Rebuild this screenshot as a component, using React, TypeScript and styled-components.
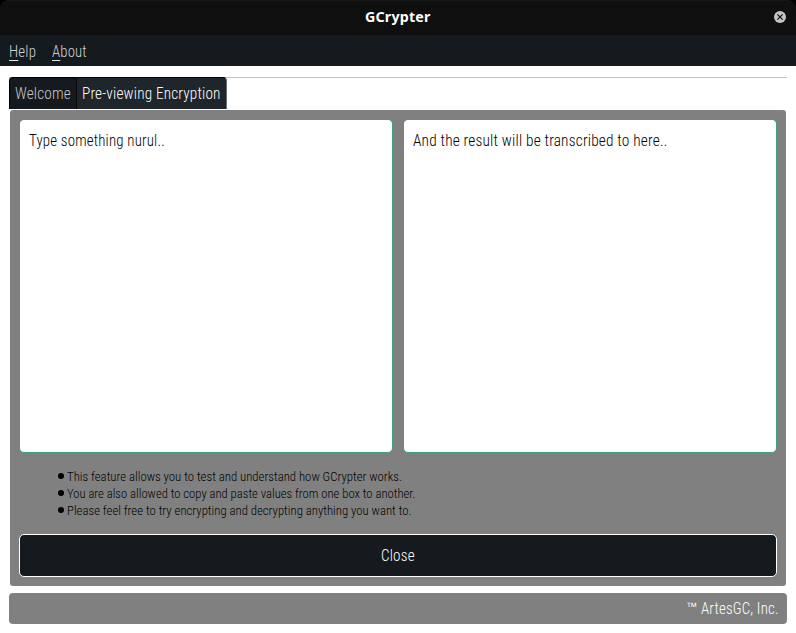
import React, { useLayoutEffect, useRef } from "react";
import styled, { createGlobalStyle } from "styled-components";

const GlobalStyle = createGlobalStyle`
  * { box-sizing: border-box; }
  body { margin: 0; background: #fff; overflow: hidden; }
`;

const Window = styled.div`
  width: 796px;
  height: 633px;
  display: flex;
  flex-direction: column;
  background: #fff;
  font-family: Roboto, "Liberation Sans", sans-serif;
  font-size: 16px;
  font-weight: 300;
  font-stretch: 75%;
  letter-spacing: 0.2px;
`;

const TitleBar = styled.header`
  height: 35px;
  display: grid;
  grid-template-columns: 32px 1fr 32px;
  align-items: center;
  justify-items: center;
  background: #0f0f0f;
  border-radius: 9px 9px 0 0;
  box-shadow: inset 0 1px 0 #171717;
  color: #fff;
`;

const TitleCorners = styled.div`
  background: #000;
`;

const Title = styled.h1`
  grid-column: 2;
  margin: 0;
  padding-bottom: 2px;
  display: flex;
  font: 700 14px/20px "Noto Sans", "Open Sans", sans-serif;
`;

const CloseWindow = styled.button`
  display: flex;
  padding: 0 0 1px;
  border: 0;
  background: none;
`;

const MenuBar = styled.nav`
  height: 31px;
  display: flex;
  gap: 16px;
  padding: 7px 9px 0;
  background: #151a1e;
  color: #d2d2d2;
`;

const MenuItem = styled.a`
  display: flex;
  height: 20px;
  line-height: 20px;
`;

const Mnemonic = styled.span`
  display: inline-block;
  height: 19px;
  border-bottom: 1px solid #e6e6e6;
`;

const Tabs = styled.div`
  height: 33px;
  margin: 11px 9px 0;
  display: flex;
  align-items: flex-start;
  border-top: 1px solid #c1c1c1;
`;

const Tab = styled.button<{ $active?: boolean }>`
  width: ${(p) => (p.$active ? 150 : 68)}px;
  height: 32px;
  margin-top: -1px;
  padding: 0 0 1px 5px;
  display: flex;
  align-items: center;
  border: 0 solid #000;
  border-top-width: 1px;
  border-right: 1px solid ${(p) => (p.$active ? "#6b6e70" : "#05080a")};
  border-left-width: ${(p) => (p.$active ? 0 : 1)}px;
  border-radius: ${(p) => (p.$active ? "0 4px 0 0" : "4px 0 0 0")};
  background: ${(p) => (p.$active ? "#1e262b" : "#151a1e")};
  color: ${(p) => (p.$active ? "#fff" : "#c8c8c8")};
  font: inherit;
  letter-spacing: inherit;
`;

const Pane = styled.main`
  height: 476px;
  margin: 0 10px;
  padding: 9px;
  display: flex;
  flex-direction: column;
  border-radius: 3px;
  background: #808080;
`;

const Editors = styled.div`
  height: 334px;
  display: grid;
  grid-template-columns: 1fr 1fr;
  gap: 10px;
`;

const Editor = styled.section`
  padding: 11px 9px 9px;
  line-height: 20px;
  border: 1px solid #3f9d80;
  border-radius: 5px;
  background: #fff;
  color: #000;
`;

const Notes = styled.ul`
  height: 81px;
  margin: 0;
  padding: 15px 0 0 39px;
  list-style: none;
  color: #000;
  font-size: 13.5px;
  letter-spacing: 0;
  line-height: 17px;
`;

const Note = styled.li`
  height: 17px;
  display: flex;
  align-items: center;
  gap: 3px;
`;

const Bullet = styled.span`
  width: 6px;
  height: 6px;
  margin-bottom: 2px;
  border-radius: 50%;
  background: #000;
`;

const CloseButton = styled.button`
  height: 43px;
  display: flex;
  align-items: center;
  justify-content: center;
  padding: 0;
  border: 1px solid #fff;
  border-radius: 5px;
  background: #151a1e;
  color: #fff;
  font: inherit;
  letter-spacing: inherit;
`;

const StatusBar = styled.footer`
  height: 31px;
  margin: 7px 9px 0;
  padding: 0 8px 1px 0;
  display: flex;
  align-items: center;
  justify-content: flex-end;
  gap: 3px;
  border-radius: 4px;
  background: #808080;
  color: #fff;
`;

const FitBox = styled.span`
  display: inline-block;
  flex: none;
  white-space: nowrap;
`;

const FitInner = styled.span`
  display: inline-block;
  transform-origin: 0 50%;
`;

/* Scales a line of text horizontally so that it fills the given width. */
function Fit({ width, children }: { width: number; children: React.ReactNode }) {
  const ref = useRef<HTMLSpanElement>(null);
  useLayoutEffect(() => {
    const el = ref.current;
    if (el) el.style.transform = `scaleX(${width / el.offsetWidth})`;
  }, [width]);
  return (
    <FitBox style={{ width }}>
      <FitInner ref={ref}>{children}</FitInner>
    </FitBox>
  );
}

const notes = [
  { text: "This feature allows you to test and understand how GCrypter works.", width: 335 },
  { text: "You are also allowed to copy and paste values from one box to another.", width: 348 },
  { text: "Please feel free to try encrypting and decrypting anything you want to.", width: 345 },
];

export default function App() {
  return (
    <Window>
      <GlobalStyle />
      <TitleCorners>
        <TitleBar>
          <Title><Fit width={66}>GCrypter</Fit></Title>
          <CloseWindow aria-label="Close window">
            <svg width="12" height="12" viewBox="0 0 12 12">
              <circle cx="6" cy="6" r="6" fill="#c4c4c4" />
              <path d="M3.4 3.4 8.6 8.6M8.6 3.4 3.4 8.6" stroke="#151515" strokeWidth="1.3" />
            </svg>
          </CloseWindow>
        </TitleBar>
      </TitleCorners>
      <MenuBar>
        <MenuItem><Fit width={27}><Mnemonic>H</Mnemonic>elp</Fit></MenuItem>
        <MenuItem><Fit width={35}><Mnemonic>A</Mnemonic>bout</Fit></MenuItem>
      </MenuBar>
      <Tabs>
        <Tab><Fit width={56}>Welcome</Fit></Tab>
        <Tab $active><Fit width={139}>Pre-viewing Encryption</Fit></Tab>
      </Tabs>
      <Pane>
        <Editors>
          <Editor><Fit width={136}>Type something nurul..</Fit></Editor>
          <Editor><Fit width={255}>And the result will be transcribed to here..</Fit></Editor>
        </Editors>
        <Notes>
          {notes.map((n) => (
            <Note key={n.text}>
              <Bullet />
              <Fit width={n.width}>{n.text}</Fit>
            </Note>
          ))}
        </Notes>
        <CloseButton><Fit width={34}>Close</Fit></CloseButton>
      </Pane>
      <StatusBar>
        <Fit width={12}>™</Fit>
        <Fit width={78}>ArtesGC, Inc.</Fit>
      </StatusBar>
    </Window>
  );
}
